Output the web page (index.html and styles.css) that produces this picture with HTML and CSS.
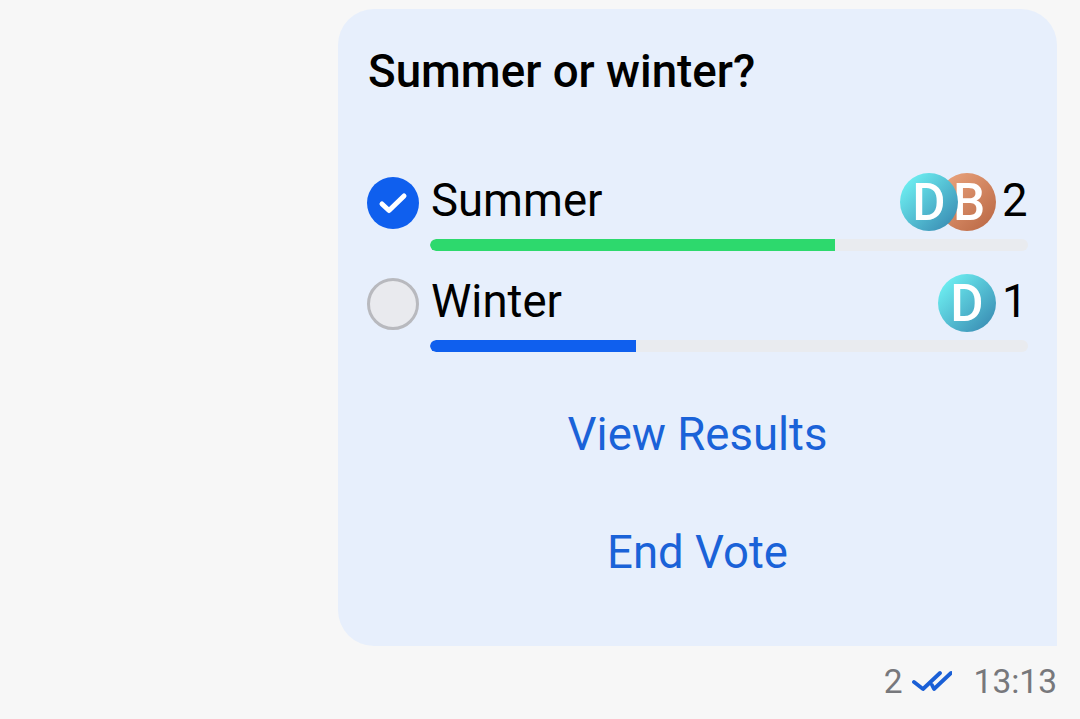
FILE: index.html
```html
<!DOCTYPE html>
<html lang="en">
<head>
<meta charset="utf-8">
<title>Poll</title>
<link rel="stylesheet" href="styles.css">
</head>
<body>
<main class="chat">
  <section class="bubble">
    <h1 class="question">Summer or winter?</h1>
    <div class="options">
      <div class="option">
        <div class="radio checked">
          <svg viewBox="0 0 52 52" width="52" height="52"><path d="M15 27l7 6.500L37 19" fill="none" stroke="#fff" stroke-width="5" stroke-linecap="round" stroke-linejoin="round"/></svg>
        </div>
        <div class="body">
          <div class="head">
            <span class="label">Summer</span>
            <div class="voters">
              <span class="avatar orange">B</span>
              <span class="avatar teal front">D</span>
            </div>
            <span class="count">2</span>
          </div>
          <div class="track"><div class="fill green"></div></div>
        </div>
      </div>
      <div class="option">
        <div class="radio"></div>
        <div class="body">
          <div class="head">
            <span class="label">Winter</span>
            <div class="voters">
              <span class="avatar teal">D</span>
            </div>
            <span class="count">1</span>
          </div>
          <div class="track"><div class="fill blue"></div></div>
        </div>
      </div>
    </div>
    <div class="action first">View Results</div>
    <div class="action">End Vote</div>
  </section>
  <footer class="meta">
    <span class="readers">2</span>
    <svg class="ticks" viewBox="0 0 40 24" width="40" height="24"><path d="M2 13l9 7L28 4M20 16l2 4L39 4" fill="none" stroke="#1a5fd6" stroke-width="3.8" stroke-linecap="round" stroke-linejoin="round"/></svg>
    <span class="time">13:13</span>
  </footer>
</main>
</body>
</html>
```
FILE: styles.css
```css
* { box-sizing: border-box; }
html, body { margin: 0; height: 100%; }
body {
  background: #f7f7f7;
  font-family: Roboto, "Noto Sans", sans-serif;
  color: #000;
  overflow: hidden;
}
.chat {
  display: flex;
  flex-direction: column;
  align-items: flex-end;
  padding: 9px 23px 0 0;
}
.bubble {
  width: 719px;
  height: 637px;
  background: #e7effc;
  border-radius: 36px 36px 0 36px;
  padding: 33px 29px 0 29px;
}
.question {
  margin: 0 0 0 1px;
  font-size: 45.7px;
  font-weight: 500;
  line-height: 60px;
}
.options {
  margin-top: 71px;
  display: flex;
  flex-direction: column;
  gap: 23px;
}
.option {
  display: flex;
  gap: 11px;
}
.radio {
  width: 52px;
  height: 52px;
  flex: none;
  margin-top: 4px;
  border-radius: 50%;
  background: #e9eaee;
  border: 3px solid #b8b9be;
}
.radio.checked {
  background: #0f5fee;
  border: 0;
}
.radio svg { display: block; }
.body { flex: 1; min-width: 0; }
.head {
  display: flex;
  align-items: center;
  height: 58px;
}
.label {
  flex: 1;
  font-size: 45.5px;
  line-height: 56px;
  padding: 0 0 2px 1px;
}
.voters { display: flex; }
.avatar {
  width: 58px;
  height: 58px;
  border-radius: 50%;
  display: flex;
  align-items: center;
  justify-content: center;
  color: #fff;
  font-size: 51px;
  font-weight: 500;
}
.avatar.teal { background: linear-gradient(135deg, #6ef0f2 10%, #3b8fb5 90%); }
.avatar.orange {
  background: linear-gradient(135deg, #e8a27c 10%, #bd6b47 90%);
  order: 2;
  margin-left: -20px;
  padding-left: 4px;
}
.avatar.front { order: 1; position: relative; z-index: 1; }
.count {
  font-size: 45.5px;
  line-height: 56px;
  padding-bottom: 2px;
  margin-left: 6px;
  width: 26px;
}
.track {
  margin-top: 8px;
  height: 12px;
  border-radius: 6px;
  background: #e9ebef;
  overflow: hidden;
}
.fill { height: 100%; border-radius: 6px 0 0 6px; }
.fill.green { width: 405px; background: #2dd96d; }
.fill.blue { width: 206px; background: #0f5fee; }
.action {
  color: #1a62d8;
  font-size: 45.5px;
  line-height: 58px;
  text-align: center;
  margin-top: 60px;
}
.action.first { margin-top: 54px; }
.meta {
  display: flex;
  align-items: center;
  height: 70px;
  color: #77787c;
  font-size: 33.5px;
}
.readers { margin-right: 9px; }
.ticks { margin-right: 22px; }
```
